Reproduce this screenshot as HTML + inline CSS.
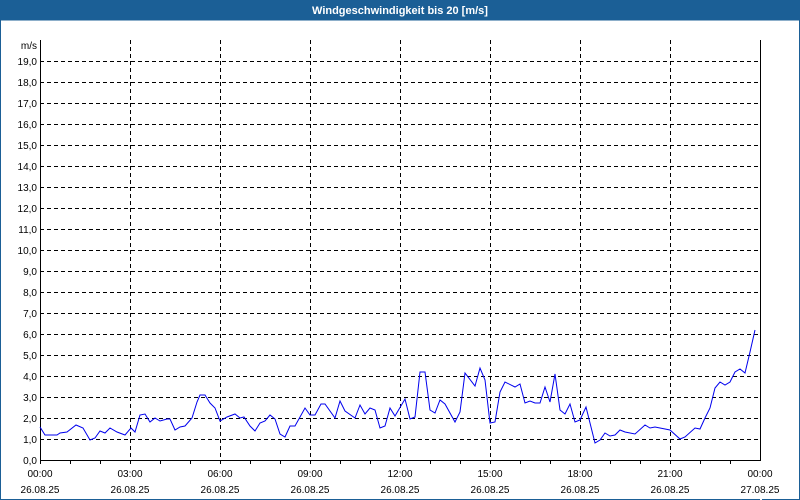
<!DOCTYPE html>
<html><head><meta charset="utf-8"><style>
html,body{margin:0;padding:0;background:#fff}
svg{display:block;font-family:"Liberation Sans","DejaVu Sans",sans-serif}
</style></head><body>
<svg width="800" height="500" viewBox="0 0 800 500" xmlns="http://www.w3.org/2000/svg">
<rect x="0" y="0" width="800" height="500" fill="#fff"/>
<rect x="0" y="0" width="800" height="20" fill="#1b5f96"/>
<rect x="0.5" y="20" width="799" height="479.5" fill="none" stroke="#1b5f96" stroke-width="1"/>
<text x="400" y="14" fill="#fff" font-size="11" font-weight="bold" text-anchor="middle">Windgeschwindigkeit bis 20 [m/s]</text>
<g stroke="#000" stroke-width="1" stroke-dasharray="4,3" fill="none">
<path d="M40 61.5H760M40 82.5H760M40 103.5H760M40 124.5H760M40 145.5H760M40 166.5H760M40 187.5H760M40 208.5H760M40 229.5H760M40 250.5H760M40 271.5H760M40 292.5H760M40 313.5H760M40 334.5H760M40 355.5H760M40 376.5H760M40 397.5H760M40 418.5H760M40 439.5H760"/>
<path d="M130.5 40V460M220.5 40V460M310.5 40V460M400.5 40V460M490.5 40V460M580.5 40V460M670.5 40V460"/>
</g>
<g stroke="#000" stroke-width="1" fill="none">
<path d="M40.5 40V460.5H760.5V480"/>
<path d="M760.5 40V460"/>
<path d="M40.5 460V464M70.5 460V464M100.5 460V464M130.5 460V464M160.5 460V464M190.5 460V464M220.5 460V464M250.5 460V464M280.5 460V464M310.5 460V464M340.5 460V464M370.5 460V464M400.5 460V464M430.5 460V464M460.5 460V464M490.5 460V464M520.5 460V464M550.5 460V464M580.5 460V464M610.5 460V464M640.5 460V464M670.5 460V464M700.5 460V464M730.5 460V464M760.5 460V464"/>
</g>
<rect x="760" y="461" width="2" height="40" fill="#fff"/>
<polyline fill="none" stroke="#0000ee" stroke-width="1" points="40,427 45,435 57,435 60,433 67,432 76,425 83,428 90,440 95,438 100,431 105,433 110,428 117,432 125,435 131,428 135,432 140,415 145,414 150,422 155,418 160,421 167,419 170,419 175,430 180,427 185,426 192,418 197,402 200,395 205,395 210,403 215,408 220,421 227,417 235,414 240,418 244,417 250,426 255,431 260,423 265,421 270,415 275,419 280,434 285,437 290,426 295,426 305,408 310,415 315,415 321,404 325,404 335,418 340,401 345,411 355,418 360,405 365,414 370,408 375,410 380,428 385,426 390,408 395,416 405,399 410,419 415,417 420,372 425,372 430,410 435,413 440,400 445,404 455,422 460,412 465,373 475,386 480,368 485,380 490,423 495,422 500,392 505,382 515,387 520,384 525,403 530,401 535,403 540,403 545,387 550,402 555,374 560,410 565,414 570,404 575,422 580,420 586,407 595,443 600,440 605,433 610,436 615,435 620,430 625,432 635,434 645,425 650,428 655,427 660,428 670,430 680,439 685,437 695,428 700,429 705,418 710,408 715,388 720,382 725,385 730,382 735,372 740,369 745,373 750,352 755,330"/>
<g font-size="10" fill="#000" text-anchor="end">
<text x="37" y="49">m/s</text>
<text x="37" y="65">19,0</text><text x="37" y="86">18,0</text><text x="37" y="107">17,0</text><text x="37" y="128">16,0</text><text x="37" y="149">15,0</text><text x="37" y="170">14,0</text><text x="37" y="191">13,0</text><text x="37" y="212">12,0</text><text x="37" y="233">11,0</text><text x="37" y="254">10,0</text><text x="37" y="275">9,0</text><text x="37" y="296">8,0</text><text x="37" y="317">7,0</text><text x="37" y="338">6,0</text><text x="37" y="359">5,0</text><text x="37" y="380">4,0</text><text x="37" y="401">3,0</text><text x="37" y="422">2,0</text><text x="37" y="443">1,0</text><text x="37" y="464">0,0</text>
</g>
<g font-size="10" fill="#000" text-anchor="middle">
<text x="40" y="477">00:00</text><text x="130" y="477">03:00</text><text x="220" y="477">06:00</text><text x="310" y="477">09:00</text><text x="400" y="477">12:00</text><text x="490" y="477">15:00</text><text x="580" y="477">18:00</text><text x="670" y="477">21:00</text><text x="760" y="477">00:00</text>
<text x="40" y="493">26.08.25</text><text x="130" y="493">26.08.25</text><text x="220" y="493">26.08.25</text><text x="310" y="493">26.08.25</text><text x="400" y="493">26.08.25</text><text x="490" y="493">26.08.25</text><text x="580" y="493">26.08.25</text><text x="670" y="493">26.08.25</text><text x="760" y="493">27.08.25</text>
</g>
</svg>
</body></html>
